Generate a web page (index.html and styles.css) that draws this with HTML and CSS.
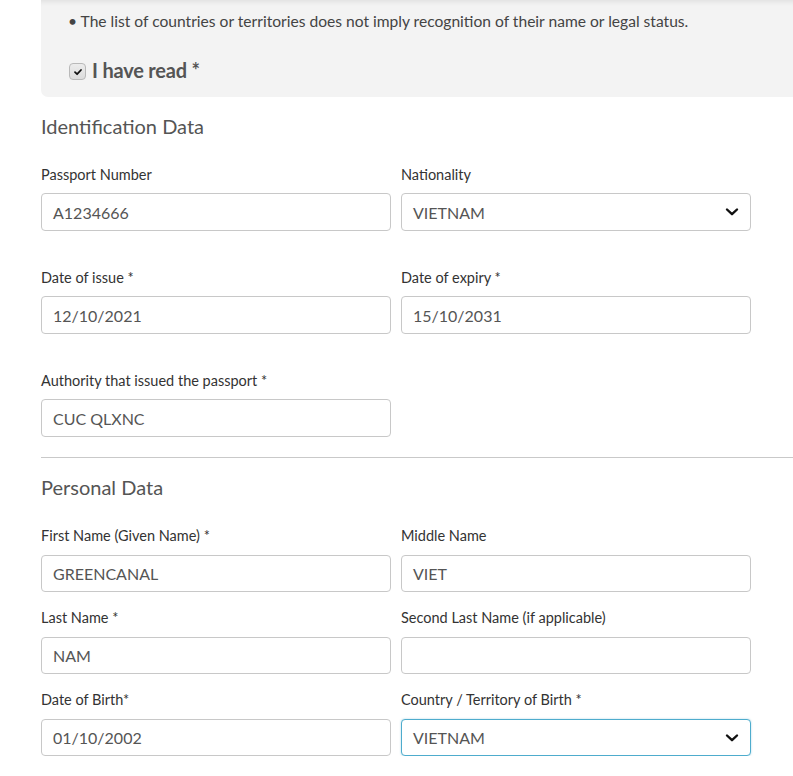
FILE: index.html
```html
<!DOCTYPE html>
<html lang="en">
<head>
<meta charset="utf-8">
<title>Form</title>
<link rel="stylesheet" href="styles.css">
</head>
<body>
<div class="page">
  <div class="notice">
    <p class="notice-item">&bull; The list of countries or territories does not imply recognition of their name or legal status.</p>
    <label class="read">
      <span class="check"><svg width="10" height="10" viewBox="0 0 10 10"><path d="M2 5.2 L4.1 7.2 L8 3" fill="none" stroke="#111" stroke-width="1.8" stroke-linecap="round" stroke-linejoin="round"/></svg></span>
      <span class="read-text">I have read *</span>
    </label>
  </div>

  <section class="section">
    <h2 class="section-title">Identification Data</h2>
    <div class="grid grid-id">
      <div class="field">
        <div class="label">Passport Number</div>
        <div class="input">A1234666</div>
      </div>
      <div class="field">
        <div class="label">Nationality</div>
        <div class="input select">VIETNAM<svg class="chev" width="14" height="10" viewBox="0 0 14 10"><path d="M2 2.5 L7 7.2 L12 2.5" fill="none" stroke="#111" stroke-width="2.4" stroke-linecap="round" stroke-linejoin="round"/></svg></div>
      </div>
      <div class="field">
        <div class="label">Date of issue *</div>
        <div class="input">12/10/2021</div>
      </div>
      <div class="field">
        <div class="label">Date of expiry *</div>
        <div class="input">15/10/2031</div>
      </div>
      <div class="field">
        <div class="label">Authority that issued the passport *</div>
        <div class="input">CUC QLXNC</div>
      </div>
    </div>
  </section>

  <hr class="divider">

  <section class="section personal">
    <h2 class="section-title">Personal Data</h2>
    <div class="grid grid-personal">
      <div class="field">
        <div class="label">First Name (Given Name) *</div>
        <div class="input">GREENCANAL</div>
      </div>
      <div class="field">
        <div class="label">Middle Name</div>
        <div class="input">VIET</div>
      </div>
      <div class="field">
        <div class="label">Last Name *</div>
        <div class="input">NAM</div>
      </div>
      <div class="field">
        <div class="label">Second Last Name (if applicable)</div>
        <div class="input"></div>
      </div>
      <div class="field">
        <div class="label">Date of Birth*</div>
        <div class="input">01/10/2002</div>
      </div>
      <div class="field">
        <div class="label">Country / Territory of Birth *</div>
        <div class="input select focus">VIETNAM<svg class="chev" width="14" height="10" viewBox="0 0 14 10"><path d="M2 2.5 L7 7.2 L12 2.5" fill="none" stroke="#111" stroke-width="2.4" stroke-linecap="round" stroke-linejoin="round"/></svg></div>
      </div>
    </div>
  </section>
</div>
</body>
</html>
```

FILE: styles.css
```css
* { box-sizing: border-box; }
html, body {
  margin: 0;
  padding: 0;
  background: #fff;
  overflow: hidden;
}
body {
  font-family: Lato, "Open Sans", "Liberation Sans", sans-serif;
  color: #333;
}
.page {
  padding-left: 41px;
}
.notice {
  background: #f3f3f3;
  border-bottom-left-radius: 7px;
  height: 97px;
  padding: 11px 0 0 27px;
  box-shadow: inset 0 6px 5px -4px rgba(0,0,0,0.08);
}
.notice-item {
  margin: 0;
  font-size: 15.6px;
  line-height: 20px;
  color: #444;
}
.read {
  display: flex;
  align-items: center;
  margin-top: 27px;
  margin-left: 1px;
}
.check {
  width: 17px;
  height: 17px;
  border: 1px solid #b9b9b9;
  border-radius: 4px;
  background: linear-gradient(#ececec, #dcdcdc);
  display: flex;
  align-items: center;
  justify-content: center;
  margin-right: 6px;
  margin-top: 3px;
}
.read-text {
  font-weight: 700;
  font-size: 20px;
  line-height: 24px;
  color: #555;
  letter-spacing: -0.2px;
}
.section-title {
  margin: 0;
  font-weight: 400;
  font-size: 20px;
  line-height: 24px;
  color: #555;
}
.section {
  padding-top: 17px;
}
.grid {
  display: grid;
  grid-template-columns: 350px 350px;
  column-gap: 10px;
  margin-top: 26px;
}
.grid-id { row-gap: 36px; }
.grid-personal { row-gap: 15px; }
.label {
  font-size: 14.5px;
  line-height: 20px;
  color: #333;
  padding-top: 1px;
  margin-bottom: 8px;
}
.grid-personal .label { margin-bottom: 9px; }
.input {
  height: 38px;
  border: 1px solid #c8c8c8;
  border-radius: 4px;
  padding: 0 11px;
  display: flex;
  align-items: center;
  font-size: 16px;
  color: #555;
  background: #fff;
}
.grid-personal .input { height: 37px; }
.select {
  justify-content: space-between;
}
.focus {
  border-color: #4eaccd;
  box-shadow: 0 0 2px rgba(78,172,205,0.5);
}
.divider {
  margin: 20px 0 0 0;
  border: 0;
  border-top: 1px solid #c9c9c9;
  height: 0;
}
```
